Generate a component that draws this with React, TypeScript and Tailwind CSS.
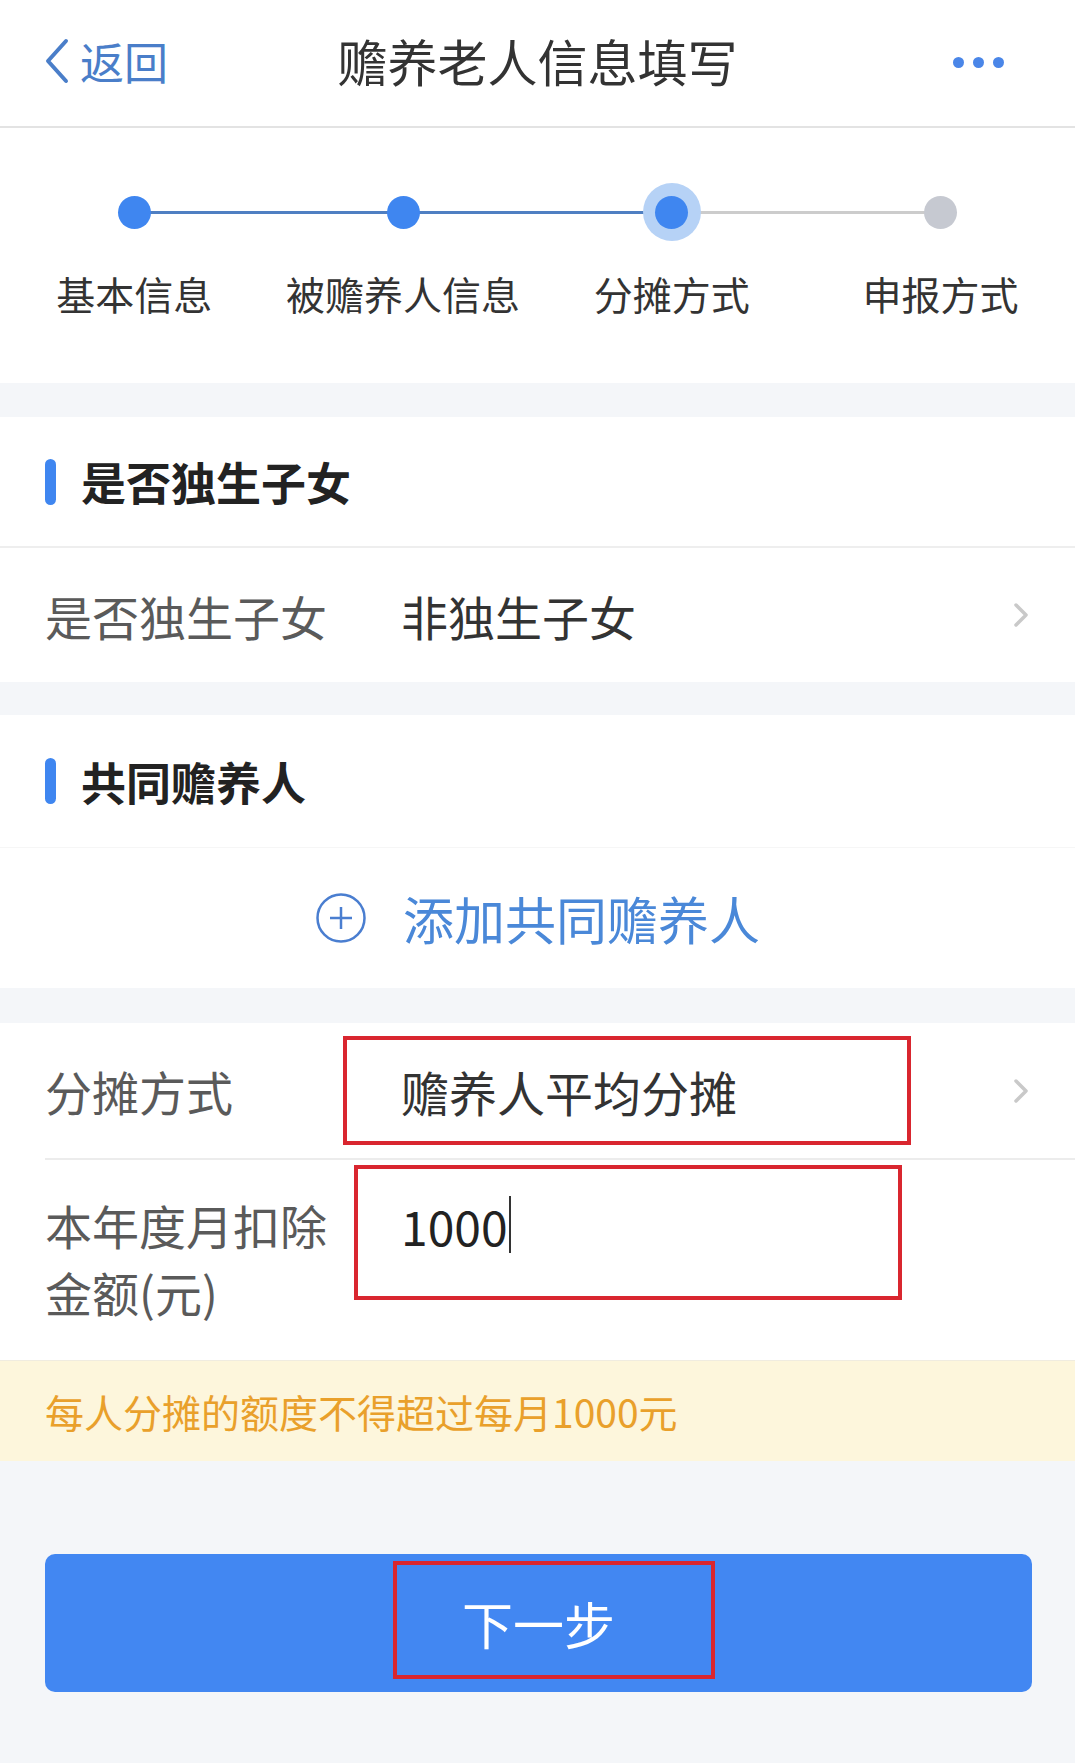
import React from "react";

const FONT = { fontFamily: '"Noto Sans CJK SC", "Noto Sans", sans-serif' };

function Chevron() {
  return (
    <svg width="18" height="26" viewBox="0 0 18 26" className="shrink-0">
      <polyline points="4,3 14,13 4,23" fill="none" stroke="#c9c9c9" strokeWidth="3.5" strokeLinecap="round" strokeLinejoin="round" />
    </svg>
  );
}

function SectionTitle({ text }: { text: string }) {
  return (
    <div className="flex items-center h-full pl-[45px]">
      <div className="w-[11px] h-[46px] rounded-full bg-[#3f86f0]" />
      <div className="ml-[25px] text-[45px] font-bold text-[#222] leading-none">{text}</div>
    </div>
  );
}

const steps = [
  { label: "基本信息", state: "done" },
  { label: "被赡养人信息", state: "done" },
  { label: "分摊方式", state: "active" },
  { label: "申报方式", state: "todo" },
];

export default function App() {
  return (
    <div style={FONT} className="w-[1075px] min-h-[1763px] bg-[#f4f6f9] flex flex-col">
      {/* Header */}
      <div className="h-[128px] bg-white border-b-2 border-[#e3e3e3] grid grid-cols-[1fr_auto_1fr] items-center">
        <div className="flex items-center pl-[44px] pb-[4px]">
          <svg width="26" height="46" viewBox="0 0 26 46">
            <polyline points="22,3 4,23 22,43" fill="none" stroke="#4a7ec9" strokeWidth="4" strokeLinecap="round" strokeLinejoin="round" />
          </svg>
          <span className="ml-[10px] text-[44px] text-[#4a7ec9] leading-none">返回</span>
        </div>
        <div className="text-[50px] text-[#333] leading-none pb-[6px]">赡养老人信息填写</div>
        <div className="flex justify-end items-center pr-[71px] gap-[9px] pb-[2px]">
          <div className="w-[11px] h-[11px] rounded-full bg-[#4a86e8]" />
          <div className="w-[11px] h-[11px] rounded-full bg-[#4a86e8]" />
          <div className="w-[11px] h-[11px] rounded-full bg-[#4a86e8]" />
        </div>
      </div>

      {/* Steps */}
      <div className="h-[255px] bg-white grid grid-cols-4 pt-[55px]">
        {steps.map((s, i) => {
          const leftColor = i === 0 ? "" : i <= 2 ? "bg-[#4f7fc2]" : "bg-[#cccccc]";
          const rightColor = i === 3 ? "" : i < 2 ? "bg-[#4f7fc2]" : "bg-[#cccccc]";
          return (
            <div key={s.label} className="flex flex-col items-center">
              <div className="relative w-full h-[58px] flex items-center justify-center">
                {i > 0 && <div className={`absolute left-0 right-1/2 top-[28px] h-[3px] ${leftColor}`} />}
                {i < 3 && <div className={`absolute left-1/2 right-0 top-[28px] h-[3px] ${rightColor}`} />}
                {s.state === "active" ? (
                  <div className="relative w-[58px] h-[58px] rounded-full bg-[#b6d2f6] flex items-center justify-center">
                    <div className="w-[33px] h-[33px] rounded-full bg-[#3f86f0]" />
                  </div>
                ) : (
                  <div className={`relative w-[33px] h-[33px] rounded-full ${s.state === "done" ? "bg-[#3f86f0]" : "bg-[#c6c9d1]"}`} />
                )}
              </div>
              <div className="mt-[27px] text-[39px] leading-[50px] text-[#333] whitespace-nowrap">{s.label}</div>
            </div>
          );
        })}
      </div>

      {/* Section 1 */}
      <div className="mt-[34px] bg-white">
        <div className="h-[131px] border-b-2 border-[#eeeeee]">
          <SectionTitle text="是否独生子女" />
        </div>
        <div className="h-[134px] flex items-center pl-[45px] pr-[45px]">
          <div className="w-[356px] text-[47px] text-[#5a5a5a] leading-none">是否独生子女</div>
          <div className="flex-1 text-[47px] text-[#333] leading-none">非独生子女</div>
          <Chevron />
        </div>
      </div>

      {/* Section 2 */}
      <div className="mt-[33px] bg-white">
        <div className="h-[133px] border-b border-[#f6f6f6]">
          <SectionTitle text="共同赡养人" />
        </div>
        <div className="h-[140px] flex items-center justify-center">
          <svg width="52" height="52" viewBox="0 0 52 52" className="shrink-0">
            <circle cx="26" cy="26" r="23.5" fill="none" stroke="#4a7ed0" strokeWidth="2.5" />
            <line x1="26" y1="15" x2="26" y2="37" stroke="#4a7ed0" strokeWidth="2.5" />
            <line x1="15" y1="26" x2="37" y2="26" stroke="#4a7ed0" strokeWidth="2.5" />
          </svg>
          <span className="ml-[36px] text-[51px] text-[#4a88d8] leading-none">添加共同赡养人</span>
        </div>
      </div>

      {/* Section 3 */}
      <div className="mt-[35px] bg-white">
        <div className="relative h-[135px] flex items-center pl-[45px] pr-[45px]">
          <div className="w-[356px] text-[47px] text-[#5a5a5a] leading-none">分摊方式</div>
          <div className="flex-1 text-[48px] text-[#333] leading-none">赡养人平均分摊</div>
          <Chevron />
          <div className="absolute left-[343px] top-[13px] w-[568px] h-[109px] border-[4px] border-[#d9262f]" />
        </div>
        <div className="ml-[45px] h-[2px] bg-[#ececec]" />
        <div className="relative h-[200px] flex items-start pl-[45px] pt-[31px]">
          <div className="w-[356px] text-[47px] text-[#5a5a5a] leading-[67px]">
            本年度月扣除
            <br />
            金额(元)
          </div>
          <div className="flex items-center h-[67px] text-[48px] text-[#222] leading-none">
            <span>1000</span>
            <span className="inline-block w-[2px] h-[57px] bg-[#333] ml-[1px]" />
          </div>
          <div className="absolute left-[354px] top-[5px] w-[548px] h-[135px] border-[4px] border-[#d9262f]" />
        </div>
      </div>

      {/* Notice */}
      <div className="h-[101px] bg-[#fdf6dc] border-t border-[#f0ece0] flex items-center pl-[45px]">
        <span className="text-[39px] text-[#e9a02b] leading-none">每人分摊的额度不得超过每月1000元</span>
      </div>

      {/* Button */}
      <div className="pt-[93px] pl-[45px] pr-[43px]">
        <div className="relative h-[138px] rounded-[10px] bg-[#4287f2] flex items-center justify-center">
          <span className="text-[51px] text-white leading-none">下一步</span>
          <div className="absolute left-[348px] top-[7px] w-[322px] h-[118px] border-[4px] border-[#d9262f]" />
        </div>
      </div>
    </div>
  );
}
